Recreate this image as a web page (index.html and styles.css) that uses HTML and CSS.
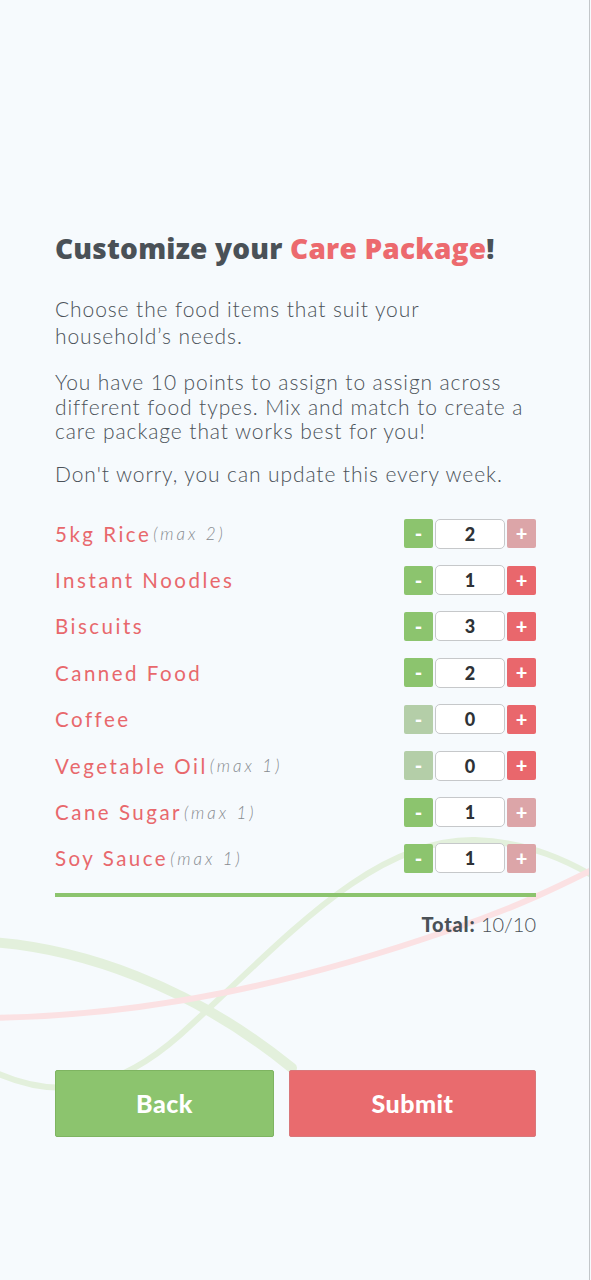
FILE: index.html
```html
<!DOCTYPE html>
<html lang="en">
<head>
    <meta charset="UTF-8">
    <meta name="viewport" content="width=device-width, initial-scale=1.0">
    <title>Customize your Care Package</title>
    <link rel="stylesheet" href="styles.css">
</head>
<body>
    <div class="page">
        <svg class="swirls" width="591" height="1280" viewBox="0 0 591 1280" aria-hidden="true">
            <path d="M -10 942 C 80 948, 190 985, 292 1068" fill="none" stroke="#e3f0dc" stroke-width="10" stroke-linecap="round"/>
            <path d="M -10 1070 C 60 1104, 120 1088, 180 1035 C 280 945, 370 838, 475 840 C 530 842, 570 862, 600 880" fill="none" stroke="#e3f0dc" stroke-width="6"/>
            <path d="M -10 1018 C 150 1016, 300 982, 450 930 C 520 906, 560 886, 600 866" fill="none" stroke="#fbe1e3" stroke-width="6"/>
        </svg>

        <div class="container">
            <h1>Customize your <span class="accent">Care Package</span>!</h1>

            <p class="intro">Choose the food items that suit your household’s needs.</p>
            <p class="points">You have 10 points to assign to assign across different food types. Mix and match to create a care package that works best for you!</p>
            <p class="note">Don't worry, you can update this every week.</p>

            <div class="items">
                <div class="item">
                    <span class="name">5kg Rice</span><span class="max">(max 2)</span>
                    <div class="stepper">
                        <button class="minus">-</button>
                        <input type="text" value="2" readonly>
                        <button class="plus off">+</button>
                    </div>
                </div>
                <div class="item">
                    <span class="name">Instant Noodles</span>
                    <div class="stepper">
                        <button class="minus">-</button>
                        <input type="text" value="1" readonly>
                        <button class="plus">+</button>
                    </div>
                </div>
                <div class="item">
                    <span class="name">Biscuits</span>
                    <div class="stepper">
                        <button class="minus">-</button>
                        <input type="text" value="3" readonly>
                        <button class="plus">+</button>
                    </div>
                </div>
                <div class="item">
                    <span class="name">Canned Food</span>
                    <div class="stepper">
                        <button class="minus">-</button>
                        <input type="text" value="2" readonly>
                        <button class="plus">+</button>
                    </div>
                </div>
                <div class="item">
                    <span class="name">Coffee</span>
                    <div class="stepper">
                        <button class="minus off">-</button>
                        <input type="text" value="0" readonly>
                        <button class="plus">+</button>
                    </div>
                </div>
                <div class="item">
                    <span class="name">Vegetable Oil</span><span class="max">(max 1)</span>
                    <div class="stepper">
                        <button class="minus off">-</button>
                        <input type="text" value="0" readonly>
                        <button class="plus">+</button>
                    </div>
                </div>
                <div class="item">
                    <span class="name">Cane Sugar</span><span class="max">(max 1)</span>
                    <div class="stepper">
                        <button class="minus">-</button>
                        <input type="text" value="1" readonly>
                        <button class="plus off">+</button>
                    </div>
                </div>
                <div class="item">
                    <span class="name">Soy Sauce</span><span class="max">(max 1)</span>
                    <div class="stepper">
                        <button class="minus">-</button>
                        <input type="text" value="1" readonly>
                        <button class="plus off">+</button>
                    </div>
                </div>
            </div>

            <div class="bar"></div>
            <p class="total"><b>Total:</b> 10/10</p>

            <div class="actions">
                <button class="back">Back</button>
                <button class="submit">Submit</button>
            </div>
        </div>
    </div>
</body>
</html>
```

FILE: styles.css
```css
html {
    background-color: #f6fafd;
}
body {
    margin: 0;
    font-family: Lato, "Open Sans", sans-serif;
    color: #4b5259;
}
.page {
    position: relative;
    width: 589px;
    min-height: 1280px;
    border-right: 1px solid #c2c6c9;
    overflow: hidden;
}
.swirls {
    position: absolute;
    left: 0;
    top: 0;
}
.container {
    position: relative;
    padding: 231px 53px 0 55px;
}
h1 {
    margin: 0;
    font-family: "Open Sans", Lato, sans-serif;
    font-size: 28px;
    line-height: 34px;
    font-weight: 800;
    letter-spacing: 0.2px;
    color: #4a5157;
}
.accent {
    color: #ec6a6e;
}
.intro, .points, .note {
    margin: 0;
    font-size: 21px;
    font-weight: 300;
    letter-spacing: 0.9px;
    color: #4b5259;
}
.intro {
    margin-top: 30px;
    line-height: 27px;
}
.points {
    margin-top: 21px;
    line-height: 24.5px;
}
.note {
    margin-top: 17px;
    line-height: 25px;
}
.items {
    margin-top: 25px;
}
.item {
    display: flex;
    align-items: center;
    height: 46.4px;
}
.name {
    font-size: 20.5px;
    letter-spacing: 2.5px;
    color: #e8686c;
}
.max {
    margin-left: 2px;
    font-size: 17px;
    font-style: italic;
    font-weight: 300;
    letter-spacing: 3px;
    color: #868b90;
}
.stepper {
    margin-left: auto;
    display: flex;
    align-items: center;
    gap: 1px;
}
.stepper button {
    width: 29px;
    height: 29px;
    padding: 0;
    border: none;
    border-radius: 2px;
    color: white;
    font-family: Lato, sans-serif;
    font-size: 20px;
    font-weight: 900;
    line-height: 29px;
}
.minus {
    background-color: #8cc46e;
}
.minus.off {
    background-color: #b4cea8;
}
.plus {
    background-color: #e9676c;
}
.plus.off {
    background-color: #dca5a8;
}
.stepper input {
    width: 70px;
    height: 30px;
    margin: 0 1px;
    box-sizing: border-box;
    border: 1px solid #c6c8ca;
    border-radius: 5px;
    background-color: white;
    text-align: center;
    font-family: Lato, sans-serif;
    font-size: 18px;
    font-weight: 900;
    color: #2e3236;
}
.bar {
    margin-top: 11px;
    height: 4px;
    background-color: #8cc46e;
}
.total {
    margin: 15px 0 0 0;
    text-align: right;
    font-size: 20px;
    line-height: 24px;
    font-weight: 300;
    color: #4a5157;
}
.total b {
    font-weight: 900;
    letter-spacing: 0.8px;
}
.actions {
    margin-top: 134px;
    display: grid;
    grid-template-columns: 219px 1fr;
    gap: 15px;
}
.actions button {
    height: 67px;
    border-radius: 2px;
    color: white;
    font-family: Lato, sans-serif;
    font-size: 25px;
    font-weight: 900;
    letter-spacing: 0.5px;
    cursor: pointer;
}
.back {
    background-color: #8cc46e;
    border: 1px solid #7eb461;
}
.submit {
    background-color: #e96b6e;
    border: 1px solid #d9777a;
}
```
